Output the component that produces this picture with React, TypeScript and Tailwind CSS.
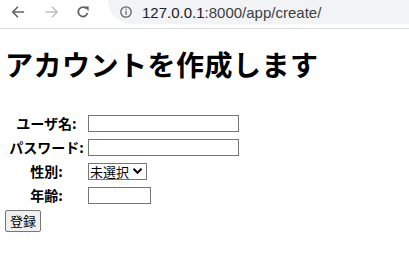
import React from 'react'

const jp = "font-['Meiryo','Noto_Sans_CJK_JP','Noto_Sans',sans-serif]"

function Toolbar() {
  return (
    <div className="flex h-[29px] items-start border-b border-[#dadce0] bg-white">
      <div className="flex h-[24px] items-center">
        {/* back */}
        <svg className="ml-[11px]" width="14" height="14" viewBox="0 0 16 16">
          <path d="M15 8H2.5M8 2L2 8l6 6" fill="none" stroke="#5f6368" strokeWidth="1.8" />
        </svg>
        {/* forward */}
        <svg className="ml-[20px]" width="14" height="14" viewBox="0 0 16 16">
          <path d="M1 8h12.5M8 2l6 6-6 6" fill="none" stroke="#bdc1c6" strokeWidth="1.8" />
        </svg>
        {/* reload */}
        <svg className="ml-[17px]" width="14" height="14" viewBox="0 0 16 16">
          <path d="M13.2 9.2A5.4 5.4 0 1 1 11.9 4" fill="none" stroke="#5f6368" strokeWidth="2" />
          <path d="M9.2 1.6h5.2v5.2z" fill="#5f6368" />
        </svg>
      </div>
      <div className="ml-[18px] flex h-[24px] flex-1 items-center rounded-bl-full bg-[#f1f3f4] pl-[12px]">
        <svg width="12" height="12" viewBox="0 0 12 12">
          <circle cx="6" cy="6" r="5.2" fill="none" stroke="#5f6368" strokeWidth="1.3" />
          <rect x="5.35" y="5" width="1.3" height="3.8" fill="#5f6368" />
          <rect x="5.35" y="2.8" width="1.3" height="1.3" fill="#5f6368" />
        </svg>
        <span className="ml-[10px] font-['Liberation_Sans',sans-serif] text-[15px] leading-none text-[#202124]">
          127.0.0.1<span className="text-[#3c4043]">:8000/app/create/</span>
        </span>
      </div>
    </div>
  )
}

function Label({ children }: { children: React.ReactNode }) {
  return <div className="flex w-[83px] items-center justify-center text-[14px] font-bold">{children}</div>
}

export default function App() {
  return (
    <div className={`${jp} h-[269px] w-[409px] overflow-hidden bg-white text-black`}>
      <Toolbar />
      <div className="pl-[5px]">
        <h1 className="mt-[19px] text-[28px] font-bold leading-[32px] tracking-[0.5px]">アカウントを作成します</h1>
        <div className="mt-[32px] flex flex-col">
          <div className="flex h-[23px] items-center">
            <Label>ユーザ名:</Label>
            <input className="h-[17px] w-[151px] border border-[#767676] bg-white" />
          </div>
          <div className="flex h-[24px] items-center">
            <Label>パスワード:</Label>
            <input type="password" className="h-[17px] w-[151px] border border-[#767676] bg-white" />
          </div>
          <div className="flex h-[24px] items-center">
            <Label>性別:</Label>
            <div className="flex h-[17px] w-[59px] items-center border border-[#767676] bg-white pl-[1px] text-[13px] leading-none">
              <span>未選択</span>
              <svg className="ml-[3px]" width="11" height="8" viewBox="0 0 11 8">
                <path d="M1.5 1.8L5.5 5.8 9.5 1.8" fill="none" stroke="#000" strokeWidth="2" />
              </svg>
            </div>
          </div>
          <div className="flex h-[24px] items-center">
            <Label>年齢:</Label>
            <input type="number" className="h-[17px] w-[63px] border border-[#767676] bg-white" />
          </div>
        </div>
        <button className="mt-[1px] h-[22px] w-[36px] rounded-[2px] border border-[#767676] bg-[#efefef] text-[13px] leading-none">
          登録
        </button>
      </div>
    </div>
  )
}
